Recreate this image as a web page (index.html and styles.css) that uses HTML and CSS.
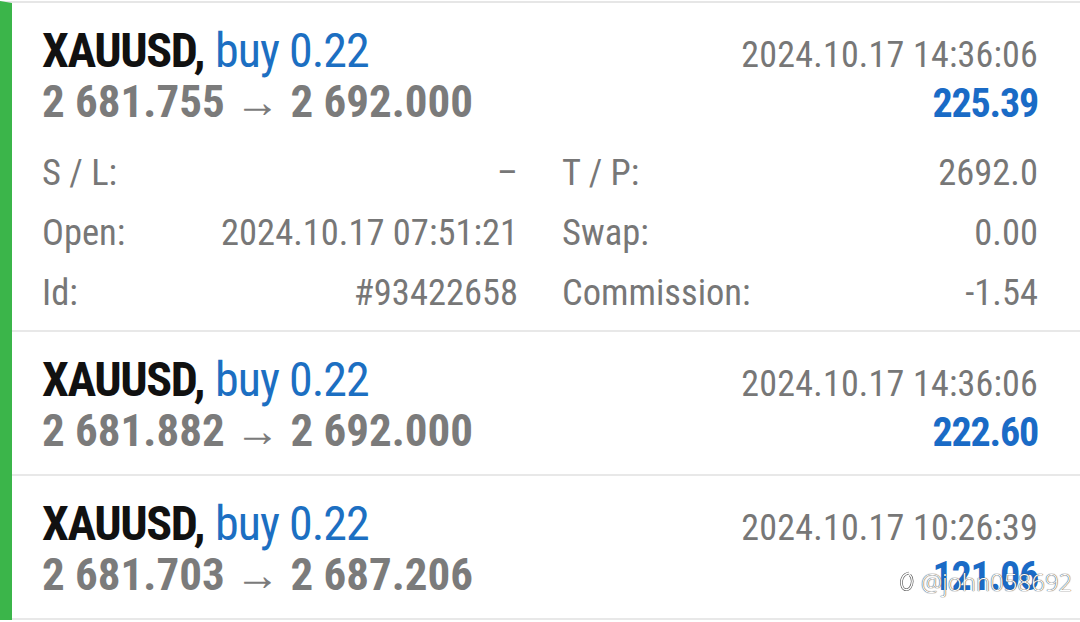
FILE: index.html
```html
<!DOCTYPE html>
<html>
<head>
    <meta charset="UTF-8">
    <title>History</title>
    <link rel="stylesheet" href="styles.css">
</head>
<body>
    <div class="deals">
        <div class="deal">
            <div class="head">
                <div class="line1">
                    <span class="name"><b>XAUUSD,</b> <span class="type">buy 0.22</span></span>
                    <span class="time">2024.10.17 14:36:06</span>
                </div>
                <div class="line2">
                    <span class="price">2 681.755 &rarr; 2 692.000</span>
                    <span class="profit">225.39</span>
                </div>
            </div>
            <div class="details">
                <div class="col">
                    <div class="row"><span>S / L:</span><span>&ndash;</span></div>
                    <div class="row"><span>Open:</span><span>2024.10.17 07:51:21</span></div>
                    <div class="row"><span>Id:</span><span>#93422658</span></div>
                </div>
                <div class="col">
                    <div class="row"><span>T / P:</span><span>2692.0</span></div>
                    <div class="row"><span>Swap:</span><span>0.00</span></div>
                    <div class="row"><span>Commission:</span><span>-1.54</span></div>
                </div>
            </div>
        </div>
        <div class="deal">
            <div class="head">
                <div class="line1">
                    <span class="name"><b>XAUUSD,</b> <span class="type">buy 0.22</span></span>
                    <span class="time">2024.10.17 14:36:06</span>
                </div>
                <div class="line2">
                    <span class="price">2 681.882 &rarr; 2 692.000</span>
                    <span class="profit">222.60</span>
                </div>
            </div>
        </div>
        <div class="deal">
            <div class="head">
                <div class="line1">
                    <span class="name"><b>XAUUSD,</b> <span class="type">buy 0.22</span></span>
                    <span class="time">2024.10.17 10:26:39</span>
                </div>
                <div class="line2">
                    <span class="price">2 681.703 &rarr; 2 687.206</span>
                    <span class="profit">121.06</span>
                </div>
            </div>
        </div>
    </div>

    <div class="watermark">
        <svg width="18" height="24" viewBox="0 0 18 24">
            <path d="M11 3 C5 4 2 10 4 16 C5 20 9 21 12 18 C15 14 15 8 12 5" fill="none" stroke="#555" stroke-width="2.6"/>
            <path d="M11 3 C5 4 2 10 4 16 C5 20 9 21 12 18 C15 14 15 8 12 5" fill="none" stroke="#fff" stroke-width="1.4"/>
        </svg>
        <span>@john058692</span>
    </div>
</body>
</html>
```

FILE: styles.css
```css
body {
    margin: 0;
    font-family: "Roboto Condensed", Roboto, "Liberation Sans", sans-serif;
    background-color: #fff;
    overflow: hidden;
}

.deals {
    margin-top: 1px;
    border-top: 2px solid #e6e6e6;
    border-left: 12px solid #3bb54a;
}

.deal {
    border-bottom: 2px solid #e8e8e8;
    padding: 0 42px 0 30px;
}

.head {
    padding: 23px 0 17px;
}

.line1,
.line2 {
    display: flex;
    justify-content: space-between;
    align-items: baseline;
}

.line1 {
    height: 50px;
    line-height: 50px;
}

.line2 {
    height: 52px;
    line-height: 52px;
}

.name {
    font-size: 48px;
    color: #111;
}

.name b {
    font-weight: bold;
    letter-spacing: -1.4px;
}

.type {
    color: #1c6fc2;
    letter-spacing: -1px;
}

.time {
    font-size: 36px;
    color: #777;
    letter-spacing: 0.2px;
}

.price {
    font-size: 45px;
    font-weight: bold;
    color: #7b7b7b;
}

.profit {
    font-size: 40px;
    font-weight: bold;
    color: #1a6bc6;
    letter-spacing: -1.2px;
}

.details {
    display: flex;
    gap: 44px;
    margin-top: -2px;
    padding-bottom: 7px;
}

.col {
    flex: 1;
}

.row {
    display: flex;
    justify-content: space-between;
    height: 60px;
    line-height: 60px;
    font-size: 36.5px;
    color: #777;
}

.watermark {
    position: absolute;
    left: 898px;
    top: 567px;
    display: flex;
    align-items: center;
    gap: 5px;
    white-space: nowrap;
    font-family: "Open Sans", sans-serif;
    font-size: 24px;
    font-weight: 300;
    line-height: 30px;
    color: #fff;
    text-shadow: 0 0 1px #444, 0 0 1px #444;
}
```
